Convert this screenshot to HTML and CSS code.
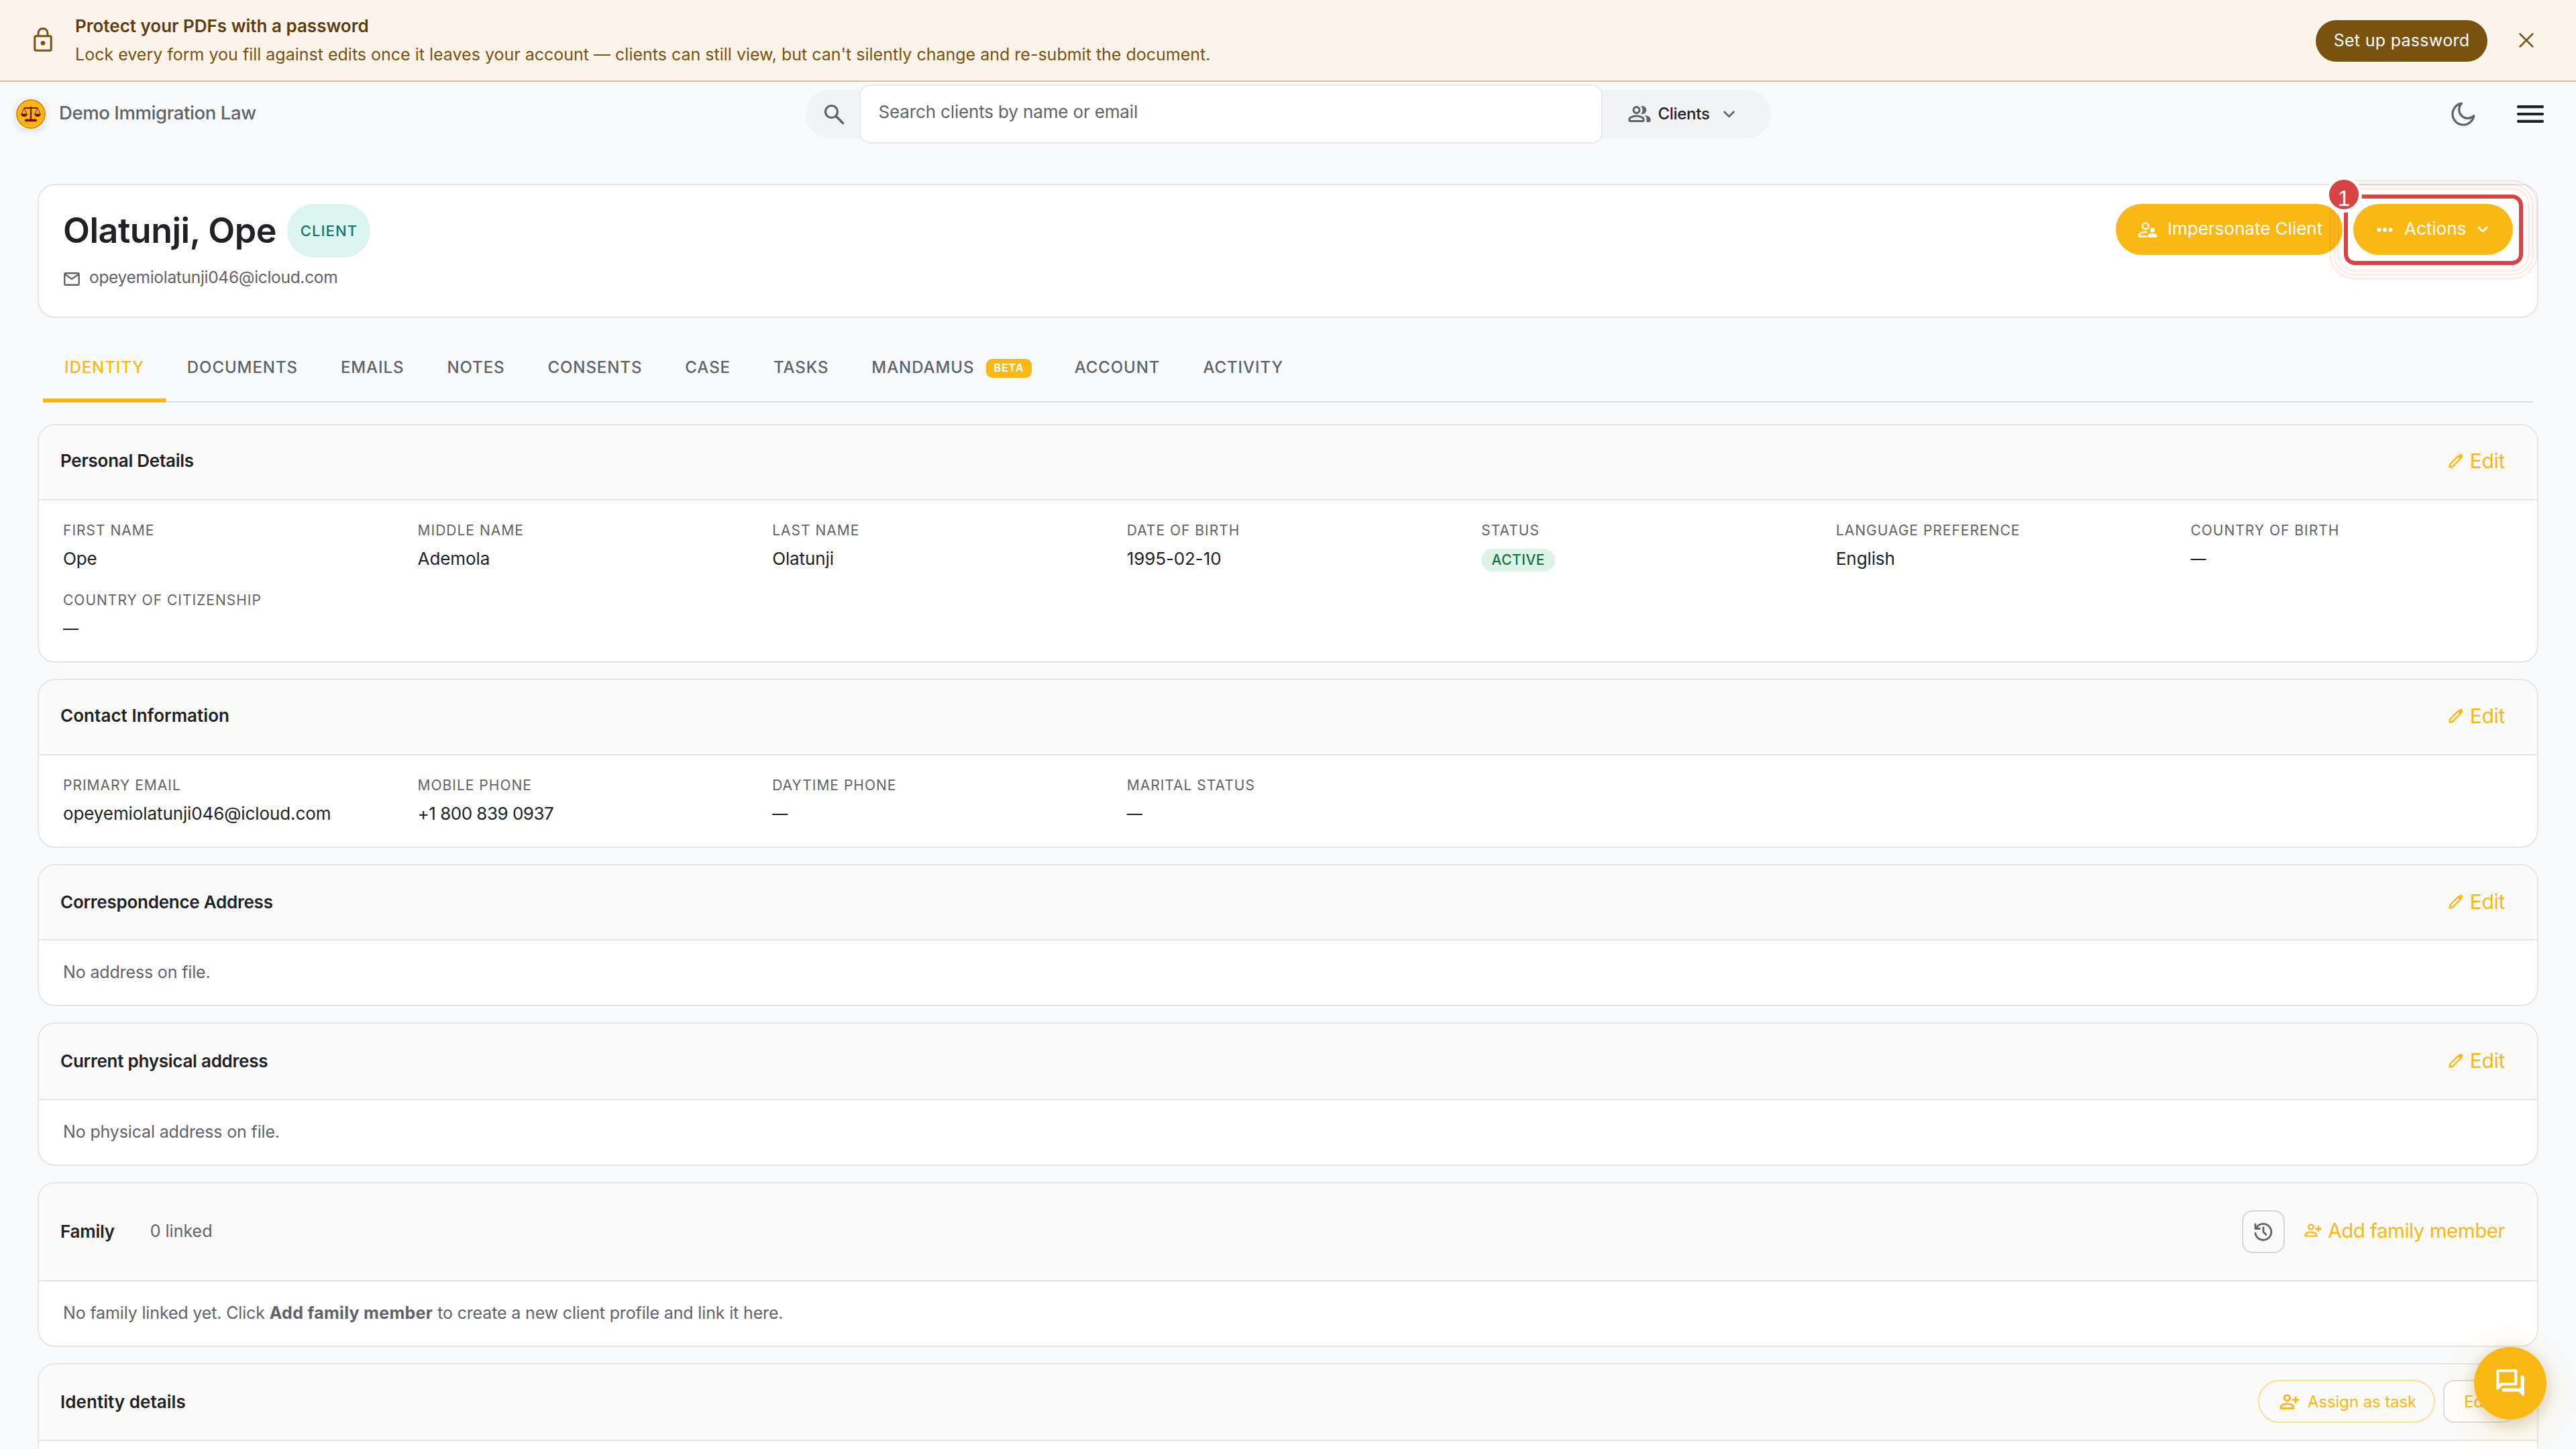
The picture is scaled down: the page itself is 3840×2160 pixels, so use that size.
FILE: index.html
```html
<!DOCTYPE html>
<html lang="en">
<head>
  <meta charset="UTF-8">
  <meta name="viewport" content="width=device-width, initial-scale=1.0">
  <title>Olatunji, Ope - Demo Immigration Law</title>
  <link rel="stylesheet" href="styles.css">
</head>
<body>
<!-- Shared icons -->
<svg class="sprite" aria-hidden="true">
  <symbol id="icon-group" viewBox="0 0 24 24">
    <path d="M9 12c2.2 0 4-1.8 4-4s-1.8-4-4-4-4 1.800-4 4 1.800 4 4 4zm0-6c1.100 0 2 .9 2 2s-.9 2-2 2-2-.9-2-2 .9-2 2-2z"/>
    <path d="M9 13c-2.700 0-8 1.300-8 4v1.500c0 .8.700 1.500 1.500 1.500h13c.8 0 1.500-.7 1.500-1.500V17c0-2.700-5.300-4-8-4zm6 5H3v-1c.2-.7 3.300-2 6-2s5.800 1.300 6 2v1z"/>
    <path d="M14.800 12c2.200 0 4-1.800 4-4s-1.800-4-4-4c-.6 0-1 .1-1.300.200C14.500 5.300 15 6.600 15 8s-.5 2.700-1.500 3.800c.3.100.7.200 1.300.200z"/>
    <path d="M17 13.200c1.300.9 2 2.100 2 3.800v3h2.500c.8 0 1.500-.7 1.500-1.500V17c0-2-3-3.400-6-3.800z"/>
  </symbol>
  <symbol id="icon-pencil" viewBox="0 0 24 24">
    <path d="M2.500 21.500l.8-4.500L15.500 4.800l3.700 3.700L7 20.700z" fill="none" stroke="currentColor" stroke-width="2.400" stroke-linejoin="round"/>
    <path d="M14.500 5.500l3.300-3.300c.8-.8 1.900-.8 2.700 0l1.300 1.300c.8.8.8 1.900 0 2.700l-3.300 3.300z"/>
  </symbol>
  <symbol id="icon-person-add" viewBox="0 0 28 22">
    <g fill="none" stroke="currentColor" stroke-width="2.600" stroke-linecap="round" stroke-linejoin="round">
      <circle cx="10.500" cy="5.500" r="4"/>
      <path d="M1.500 20.500v-2c0-2.500 4.500-4.500 9-4.500s9 2 9 4.500v2z"/>
      <path d="M22.700 4.500v8M18.700 8.500h8"/>
    </g>
  </symbol>
  <symbol id="icon-chevron" viewBox="0 0 16 10">
    <path d="M1.500 1.500L8 8l6.500-6.500" fill="none" stroke="currentColor" stroke-width="2.500" stroke-linecap="round" stroke-linejoin="round"/>
  </symbol>
</svg>

<div class="banner">
  <svg class="banner-icon" viewBox="0 0 28 36">
    <path d="M7 13V8.500a7 7 0 0 1 14 0V13" fill="none" stroke="currentColor" stroke-width="3"/>
    <rect x="1.800" y="12.800" width="24.400" height="21.400" rx="2" fill="none" stroke="currentColor" stroke-width="3"/>
    <circle cx="14" cy="23.300" r="3.300" fill="currentColor"/>
  </svg>
  <div class="banner-text">
    <div class="banner-title">Protect your PDFs with a password</div>
    <div class="banner-desc">Lock every form you fill against edits once it leaves your account — clients can still view, but can't silently change and re-submit the document.</div>
  </div>
  <button class="banner-btn">Set up password</button>
  <button class="banner-close" aria-label="Dismiss">
    <svg viewBox="0 0 20 20"><path d="M1.500 1.500l17 17M18.500 1.500l-17 17" stroke="currentColor" stroke-width="2.500" stroke-linecap="round"/></svg>
  </button>
</div>

<header class="topbar">
  <div class="brand">
    <div class="logo">
      <svg viewBox="0 0 44 44">
        <circle cx="22" cy="22" r="21" fill="#fcb614" stroke="#d98a14" stroke-width="2"/>
        <g stroke="#7a1408" fill="none">
          <path d="M12 13h20" stroke-width="2"/>
          <path d="M22 11v20" stroke-width="2.400"/>
          <path d="M12 13l-4 9M12 13l4 9M32 13l-4 9M32 13l4 9" stroke-width="1"/>
        </g>
        <g fill="#7a1408">
          <path d="M7 21.500h10a5 4.500 0 0 1-10 0zM27 21.500h10a5 4.500 0 0 1-10 0z"/>
          <rect x="13" y="29.500" width="18" height="3.800" rx="1.500"/>
        </g>
      </svg>
    </div>
    <span class="brand-name">Demo Immigration Law</span>
  </div>
  <div class="search">
    <svg class="search-icon" viewBox="0 0 31 31">
      <circle cx="11.500" cy="11.500" r="9" fill="none" stroke="currentColor" stroke-width="3.200"/>
      <path d="M18.500 18.500l10 10" stroke="currentColor" stroke-width="3.600" stroke-linecap="round"/>
    </svg>
    <div class="search-field">Search clients by name or email</div>
    <div class="search-scope">
      <svg class="scope-icon"><use href="#icon-group"/></svg>
      <span>Clients</span>
      <svg class="scope-chevron"><use href="#icon-chevron"/></svg>
    </div>
  </div>
  <div class="topbar-actions">
    <svg class="moon" viewBox="0 0 36 36">
      <path d="M15.500 2.200A16 16 0 1 0 33.800 20.500A10.500 10.500 0 0 1 15.500 2.200z" fill="none" stroke="currentColor" stroke-width="3.200" stroke-linejoin="round"/>
    </svg>
    <svg class="menu" viewBox="0 0 40 28">
      <path d="M2 3.200h36M2 14h36M2 24.800h36" stroke="currentColor" stroke-width="4.200" stroke-linecap="round"/>
    </svg>
  </div>
</header>

<main class="page">
  <section class="card profile">
    <div>
      <div class="profile-head">
        <h1>Olatunji, Ope</h1>
        <span class="chip chip-client">CLIENT</span>
      </div>
      <div class="profile-email">
        <svg viewBox="0 0 24 20">
          <rect x="1.300" y="1.300" width="21.400" height="17.400" rx="1.800" fill="none" stroke="currentColor" stroke-width="2.400"/>
          <path d="M2 3l10 7 10-7" fill="none" stroke="currentColor" stroke-width="2.200"/>
        </svg>
        <span>opeyemiolatunji046@icloud.com</span>
      </div>
    </div>
    <div class="profile-actions">
      <button class="btn btn-impersonate">
        <svg viewBox="0 0 29 23">
          <g fill="none" stroke="currentColor" stroke-width="2.500" stroke-linecap="round">
            <circle cx="11.300" cy="6" r="4.500"/>
            <path d="M12 21.600H1.500v-1.500c0-3 4.500-5.300 11-5"/>
          </g>
          <circle cx="21.500" cy="12" r="3.500" fill="currentColor"/>
          <path d="M14.500 22.800v-2.300c0-2 3-3.500 7-3.500s7 1.500 7 3.500v2.300z" fill="currentColor"/>
        </svg>
        <span>Impersonate Client</span>
      </button>
      <div class="actions-wrap">
        <button class="btn btn-actions">
          <svg class="dots" viewBox="0 0 24 7">
            <circle cx="3.500" cy="3.500" r="3"/><circle cx="12" cy="3.500" r="3"/><circle cx="20.500" cy="3.500" r="3"/>
          </svg>
          <span>Actions</span>
          <svg class="btn-chevron"><use href="#icon-chevron"/></svg>
        </button>
        <div class="spotlight">
          <i class="ring ring-1"></i>
          <i class="ring ring-2"></i>
          <i class="ring ring-3"></i>
          <span class="step">1</span>
        </div>
      </div>
    </div>
  </section>

  <nav class="tabs">
    <a class="tab active">IDENTITY</a>
    <a class="tab">DOCUMENTS</a>
    <a class="tab">EMAILS</a>
    <a class="tab">NOTES</a>
    <a class="tab">CONSENTS</a>
    <a class="tab">CASE</a>
    <a class="tab">TASKS</a>
    <a class="tab">MANDAMUS <span class="beta">BETA</span></a>
    <a class="tab">ACCOUNT</a>
    <a class="tab">ACTIVITY</a>
  </nav>

  <div class="sections">
    <section class="card">
      <div class="card-header raised">
        <h2>Personal Details</h2>
        <a class="link"><svg class="pencil"><use href="#icon-pencil"/></svg>Edit</a>
      </div>
      <dl class="fields">
        <div><dt>FIRST NAME</dt><dd>Ope</dd></div>
        <div><dt>MIDDLE NAME</dt><dd>Ademola</dd></div>
        <div><dt>LAST NAME</dt><dd>Olatunji</dd></div>
        <div><dt>DATE OF BIRTH</dt><dd>1995-02-10</dd></div>
        <div><dt>STATUS</dt><dd><span class="chip chip-active">ACTIVE</span></dd></div>
        <div><dt>LANGUAGE PREFERENCE</dt><dd>English</dd></div>
        <div><dt>COUNTRY OF BIRTH</dt><dd class="none">—</dd></div>
        <div><dt>COUNTRY OF CITIZENSHIP</dt><dd class="none">—</dd></div>
      </dl>
    </section>

    <section class="card">
      <div class="card-header raised">
        <h2 class="wide">Contact Information</h2>
        <a class="link"><svg class="pencil"><use href="#icon-pencil"/></svg>Edit</a>
      </div>
      <dl class="fields">
        <div><dt>PRIMARY EMAIL</dt><dd>opeyemiolatunji046@icloud.com</dd></div>
        <div><dt>MOBILE PHONE</dt><dd class="phone">+1 800 839 0937</dd></div>
        <div><dt>DAYTIME PHONE</dt><dd class="none">—</dd></div>
        <div><dt>MARITAL STATUS</dt><dd class="none">—</dd></div>
      </dl>
    </section>

    <section class="card">
      <div class="card-header">
        <h2>Correspondence Address</h2>
        <a class="link"><svg class="pencil"><use href="#icon-pencil"/></svg>Edit</a>
      </div>
      <p class="empty">No address on file.</p>
    </section>

    <section class="card">
      <div class="card-header header-md">
        <h2>Current physical address</h2>
        <a class="link"><svg class="pencil"><use href="#icon-pencil"/></svg>Edit</a>
      </div>
      <p class="empty">No physical address on file.</p>
    </section>

    <section class="card">
      <div class="card-header header-lg">
        <h2>Family</h2>
        <span class="count">0 linked</span>
        <button class="history-btn" aria-label="History">
          <svg viewBox="0 0 28 28">
            <g fill="none" stroke="currentColor" stroke-width="2.800" stroke-linecap="round" stroke-linejoin="round">
              <path d="M2 16.500A12 12 0 1 0 4 7.500l-1.500 2"/>
              <path d="M2 3v6.500h6.500"/>
              <path d="M14 8v6.500l4 4"/>
            </g>
          </svg>
        </button>
        <a class="link link-add"><svg class="person-add"><use href="#icon-person-add"/></svg>Add family member</a>
      </div>
      <p class="empty">No family linked yet. Click <strong>Add family member</strong> to create a new client profile and link it here.</p>
    </section>

    <section class="card">
      <div class="card-header header-md identity">
        <h2 class="wide">Identity details</h2>
        <div class="identity-actions">
          <button class="outline-btn assign"><svg><use href="#icon-person-add"/></svg>Assign as task</button>
          <button class="outline-btn edit">Edit</button>
        </div>
      </div>
      <p class="empty"></p>
    </section>
  </div>
</main>

<button class="fab" aria-label="Chat">
  <svg viewBox="0 0 24 24"><path d="M15 4v7.500H5.200L4 12.700V4h11m1-2H3c-.6 0-1 .4-1 1v13c0 .9.800 1.200 1.300.700L6.300 13.500H16c.6 0 1-.4 1-1V3c0-.6-.4-1-1-1zm5 4.500h-1.500v9H6v1.500c0 .6.400 1 1 1h11l2.800 2.800c.5.500 1.200.2 1.200-.5V7.500c0-.6-.4-1-1-1z" fill="currentColor"/></svg>
</button>
</body>
</html>
```
FILE: styles.css
```css
* {
  box-sizing: border-box;
  margin: 0;
  padding: 0;
}

body {
  height: 2160px;
  overflow: hidden;
  background-color: #f8fafc;
  color: #202124;
  font-family: Inter, Roboto, sans-serif;
  font-size: 26px;
}

button {
  border: none;
  background: none;
  font-family: inherit;
  cursor: pointer;
}

svg {
  display: block;
  flex: none;
  fill: currentColor;
}

.sprite {
  position: absolute;
  width: 0;
  height: 0;
}

/* Banner */
.banner {
  display: flex;
  align-items: center;
  height: 122px;
  padding: 0 63px 0 50px;
  background-color: #fcf4ea;
  border-bottom: 2px solid #e0c486;
  color: #7a5210;
}

.banner-icon {
  width: 28px;
  height: 36px;
  margin-bottom: 2px;
}

.banner-text {
  flex: 1;
  margin-left: 34px;
  line-height: 42px;
}

.banner-title {
  color: #5c3d0c;
  font-weight: 600;
}

.banner-desc {
  font-size: 25px;
}

.banner-btn {
  width: 256px;
  height: 62px;
  margin-top: 2px;
  border-radius: 31px;
  background-color: #7a5210;
  color: #fff;
  font-size: 25px;
  font-weight: 400;
  letter-spacing: 0.3px;
  padding-bottom: 3px;
}

.banner-close {
  margin-left: 47px;
  color: #7a5210;
}

.banner-close svg {
  width: 22px;
  height: 22px;
}

/* Top bar */
.topbar {
  display: grid;
  grid-template-columns: 1fr 1439px 1fr;
  align-items: center;
  height: 96px;
  padding: 0 48px 0 24px;
  color: #5f6368;
}

.brand {
  display: flex;
  align-items: center;
  gap: 20px;
}

.logo {
  width: 44px;
  height: 44px;
  border-radius: 14px;
  background-color: #fff;
  box-shadow: 0 2px 10px rgba(0, 0, 0, 0.15);
}

.brand-name {
  font-size: 27.5px;
  font-weight: 500;
  letter-spacing: -0.4px;
  padding-bottom: 4px;
}

.search {
  display: flex;
  align-items: center;
  height: 72px;
  margin-left: 12px;
  margin-right: -12px;
  border-radius: 36px;
  background-color: #f1f3f4;
}

.search-icon {
  width: 31px;
  height: 31px;
  margin: 0 22px 0 27px;
}

.search-field {
  width: 1108px;
  height: 88px;
  padding-left: 27px;
  border: 2px solid #e8eaed;
  border-radius: 16px;
  background-color: #fff;
  color: #5f6368;
  line-height: 77px;
  letter-spacing: -0.15px;
}

.search-scope {
  display: flex;
  align-items: center;
  margin-left: 37px;
  font-size: 24px;
  font-weight: 500;
  letter-spacing: -0.3px;
}

.search-scope span {
  margin: 0 20px 2px 10px;
  color: #202124;
}

.scope-icon {
  width: 36px;
  height: 36px;
}

.scope-chevron {
  width: 17px;
  height: 11px;
}

.topbar-actions {
  display: flex;
  align-items: center;
  justify-content: flex-end;
  gap: 62px;
}

.moon {
  width: 36px;
  height: 36px;
}

.menu {
  width: 40px;
  height: 28px;
  color: #202124;
}

/* Page */
.page {
  padding: 56px 56px 0;
}

.card {
  border: 2px solid #e4e5e6;
  border-radius: 26px;
  background-color: #fff;
}

.profile {
  display: flex;
  justify-content: space-between;
  height: 200px;
  padding: 28px 36px;
}

.profile-head {
  display: flex;
  align-items: center;
  gap: 16px;
  height: 80px;
}

h1 {
  padding-bottom: 2px;
  font-size: 52px;
  font-weight: 600;
  letter-spacing: -0.5px;
}

.chip {
  display: inline-flex;
  align-items: center;
  justify-content: center;
  font-weight: 500;
}

.chip-client {
  width: 124px;
  height: 80px;
  padding-left: 1px;
  border-radius: 40px;
  background-color: #dcf5f1;
  color: #0f766e;
  font-size: 22px;
  letter-spacing: 1.1px;
}

.chip-active {
  width: 110px;
  height: 34px;
  border-radius: 17px;
  background-color: #dcf3e6;
  color: #14713f;
  font-size: 21px;
  letter-spacing: 0.5px;
}

.profile-email {
  display: flex;
  align-items: center;
  gap: 14px;
  margin-top: 13px;
  padding-left: 1px;
  color: #5f6368;
  font-size: 24.5px;
  line-height: 32px;
  letter-spacing: -0.3px;
}

.profile-email svg {
  width: 24px;
  height: 20px;
  margin-top: 5px;
}

.profile-actions {
  display: flex;
  gap: 16px;
}

.btn {
  display: flex;
  align-items: center;
  height: 76px;
  border-radius: 38px;
  background-color: #f9b814;
  color: #fff;
  font-size: 26px;
  font-weight: 400;
  letter-spacing: 0;
}

.btn span {
  padding-bottom: 3px;
}

.btn-impersonate {
  width: 338px;
  padding-left: 33px;
  gap: 15px;
}

.btn-impersonate svg {
  width: 29px;
  height: 23px;
}

.btn-actions {
  width: 238px;
  padding-left: 35px;
}

.dots {
  width: 24px;
  height: 7px;
  margin-right: 17px;
}

.btn-chevron {
  width: 16px;
  height: 10px;
  margin-left: 17px;
}

/* Step highlight over the Actions button */
.actions-wrap {
  position: relative;
}

.spotlight {
  position: absolute;
  top: -14px;
  left: -14px;
  width: 267px;
  height: 105px;
  border: 6px solid #d64444;
  border-radius: 16px;
}

.ring {
  position: absolute;
  border: 3px solid rgba(214, 68, 68, 0.1);
}

.ring-1 {
  inset: -16px;
  border-radius: 26px;
}

.ring-2 {
  inset: -22px;
  border-radius: 32px;
}

.ring-3 {
  inset: -28px;
  border-radius: 38px;
}

.step {
  position: absolute;
  top: -33px;
  left: -33px;
  width: 54px;
  height: 54px;
  border: 5px solid #fff;
  border-radius: 50%;
  background-color: #d64444;
  color: #fff;
  font-family: "Liberation Sans", Arial, sans-serif;
  font-size: 34px;
  line-height: 54px;
  text-align: center;
}

/* Tabs */
.tabs {
  display: flex;
  height: 106px;
  margin: 20px 8px 32px;
  border-bottom: 2px solid #dcdee0;
}

.tab {
  display: flex;
  align-items: center;
  height: 106px;
  padding: 0 32px;
  color: #5f6368;
  font-size: 24px;
  font-weight: 500;
  letter-spacing: 0.92px;
}

.tab.active {
  color: #f9b814;
  box-shadow: inset 0 -6px #f9b814;
}

.beta {
  height: 28px;
  margin: 4px 0 0 18px;
  padding: 0 11px;
  border-radius: 9px;
  background-color: #f9b814;
  color: #fff;
  font-size: 16px;
  font-weight: 700;
  line-height: 26px;
}

/* Section cards */
.sections {
  display: flex;
  flex-direction: column;
  gap: 24px;
}

.card-header {
  display: flex;
  align-items: center;
  height: 112px;
  padding: 0 48px 2px 32px;
  border-bottom: 2px solid #e4e5e6;
  border-radius: 24px 24px 0 0;
  background-color: #fafafa;
}

.raised {
  padding-bottom: 5px;
}

.header-md {
  height: 114px;
}

.header-lg {
  height: 146px;
}

h2 {
  font-size: 26px;
  font-weight: 600;
  letter-spacing: -0.25px;
}

h2.wide {
  letter-spacing: 0.05px;
}

.link {
  display: flex;
  align-items: center;
  color: #f9b814;
  font-size: 30px;
  letter-spacing: -0.3px;
}

h2 + .link {
  margin-left: auto;
}

.pencil {
  width: 24px;
  height: 24px;
  margin-right: 9px;
}

.person-add {
  width: 26px;
  height: 20px;
  margin-right: 9px;
}

.link-add {
  padding-bottom: 2px;
  font-size: 29.5px;
  letter-spacing: -0.5px;
}

.count {
  margin-left: 53px;
  color: #5f6368;
  font-size: 25px;
}

.history-btn {
  display: flex;
  align-items: center;
  justify-content: center;
  width: 64px;
  height: 64px;
  margin: 2px 29px 0 auto;
  border: 2px solid #d4d6d8;
  border-radius: 16px;
  color: #5f6368;
}

.history-btn svg {
  width: 28px;
  height: 28px;
}

.fields {
  display: grid;
  grid-template-columns: repeat(7, 1fr);
  gap: 26px 48px;
  padding: 29px 36px 29px;
}

dt {
  margin-bottom: 8px;
  color: #5f6368;
  font-size: 21px;
  line-height: 32px;
  letter-spacing: 1px;
  white-space: nowrap;
}

dd {
  height: 38px;
  line-height: 36px;
  letter-spacing: -0.1px;
}

dd .chip {
  vertical-align: top;
  margin-top: 3px;
}

.phone {
  letter-spacing: -0.5px;
}

.none {
  font-size: 23px;
}

.empty {
  height: 96px;
  padding-left: 36px;
  color: #5f6368;
  font-size: 25px;
  line-height: 95px;
  letter-spacing: -0.15px;
}

.empty strong {
  letter-spacing: 0.3px;
}

.identity {
  padding-right: 35px;
}

.identity-actions {
  display: flex;
  gap: 12px;
  margin-left: auto;
}

.outline-btn {
  display: flex;
  align-items: center;
  height: 64px;
  color: #f9b814;
  font-size: 24px;
  font-weight: 400;
  letter-spacing: -0.1px;
}

.outline-btn svg {
  width: 30px;
  height: 23px;
  margin-right: 12px;
}

.assign {
  width: 264px;
  padding-left: 30px;
  border: 2px solid #fbdf97;
  border-radius: 32px;
}

.edit {
  width: 105px;
  padding-left: 29px;
  border: 2px solid #dadce0;
  border-radius: 16px;
  background-color: #fff;
}

.fab {
  position: fixed;
  right: 44px;
  bottom: 44px;
  display: flex;
  align-items: center;
  justify-content: center;
  width: 108px;
  height: 108px;
  border-radius: 50%;
  background-color: #f9b814;
  color: #fff;
  box-shadow: 0 12px 56px rgba(249, 184, 20, 0.25), 0 6px 24px rgba(0, 0, 0, 0.18);
}

.fab svg {
  width: 50px;
  height: 50px;
}
```
